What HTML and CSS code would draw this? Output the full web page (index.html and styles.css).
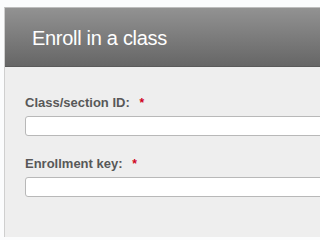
FILE: index.html
```html
<!DOCTYPE html>
<html>
<head>
<meta charset="utf-8">
<link rel="stylesheet" href="styles.css">
</head>
<body>
<div class="card">
  <div class="header"><h1 class="title">Enroll in a class</h1></div>
  <div class="body">
    <div class="field">
      <label class="label">Class/section ID: <span class="req">*</span></label>
      <div class="input"></div>
    </div>
    <div class="field">
      <label class="label">Enrollment key: <span class="req">*</span></label>
      <div class="input"></div>
    </div>
  </div>
</div>
</body>
</html>
```
FILE: styles.css
```css
html, body {
  margin: 0;
  padding: 0;
  background: #fbfcfd;
  overflow: hidden;
  font-family: "Liberation Sans", Arial, sans-serif;
}
.card {
  margin: 7px 0 0 4px;
  border-left: 1px solid #cfcfcf;
  border-top: 1px solid #bdbdbd;
  overflow: hidden;
}
.header {
  height: 58px;
  background: linear-gradient(#929292, #666666);
  border-bottom: 1px solid #5a5a5a;
  display: flex;
  align-items: center;
  padding-left: 27px;
}
.title {
  margin: 0;
  color: #ffffff;
  font-weight: normal;
  font-size: 20px;
  letter-spacing: -0.3px;
  position: relative;
  top: 1px;
}
.body {
  background: #eeeeee;
  padding: 28px 0 40px 20px;
  display: flex;
  flex-direction: column;
  gap: 20px;
}
.field {
  display: flex;
  flex-direction: column;
  gap: 5px;
}
.label {
  font-size: 13px;
  font-weight: bold;
  color: #585858;
  line-height: 15px;
}
.req {
  color: #d0021b;
  margin-left: 6px;
  font-size: 12px;
  font-weight: bold;
}
.input {
  width: 400px;
  height: 18px;
  background: #ffffff;
  border: 1px solid #b8b8b8;
  border-radius: 3px;
}
```
